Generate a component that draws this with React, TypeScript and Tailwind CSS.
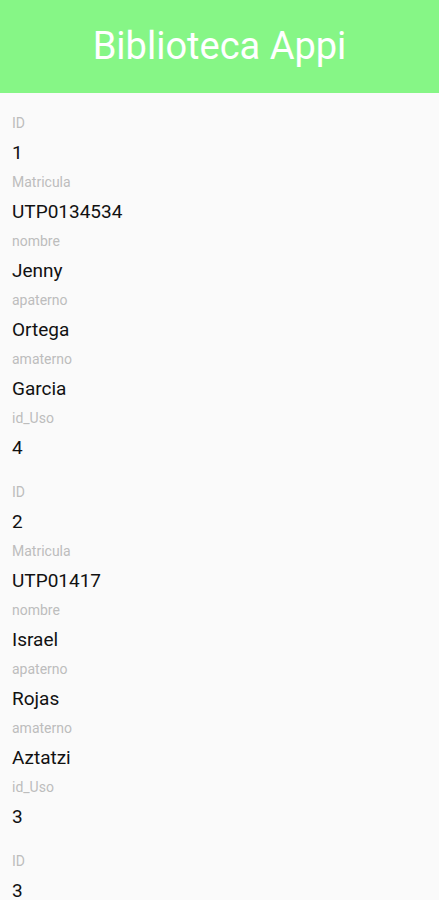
import React from 'react'

type Usuario = {
  id: number
  matricula: string
  nombre: string
  apaterno: string
  amaterno: string
  idUso: number
}

const usuarios: Usuario[] = [
  { id: 1, matricula: 'UTP0134534', nombre: 'Jenny', apaterno: 'Ortega', amaterno: 'Garcia', idUso: 4 },
  { id: 2, matricula: 'UTP01417', nombre: 'Israel', apaterno: 'Rojas', amaterno: 'Aztatzi', idUso: 3 },
  { id: 3, matricula: 'UTP0200', nombre: 'Maria', apaterno: 'Lopez', amaterno: 'Perez', idUso: 2 },
]

const Field = ({ label, value }: { label: string; value: string | number }) => (
  <div>
    <div className="h-[29px] flex items-center text-[14px] text-[#bdbdbd]">{label}</div>
    <div className="h-[30px] flex items-center text-[19px] text-[#111111]">{value}</div>
  </div>
)

const App: React.FC = () => {
  return (
    <div className="h-[900px] overflow-hidden bg-[#fafafa]" style={{ fontFamily: 'Roboto, "Noto Sans", sans-serif' }}>
      {/* Header */}
      <div className="h-[93px] bg-[#86f686] flex items-center justify-center">
        <h1 className="text-[38px] text-white font-normal">Biblioteca Appi</h1>
      </div>

      {/* Lista */}
      <div className="px-3 pt-px">
        {usuarios.map((u) => (
          <div key={u.id} className="pt-[15px]">
            <Field label="ID" value={u.id} />
            <Field label="Matricula" value={u.matricula} />
            <Field label="nombre" value={u.nombre} />
            <Field label="apaterno" value={u.apaterno} />
            <Field label="amaterno" value={u.amaterno} />
            <Field label="id_Uso" value={u.idUso} />
          </div>
        ))}
      </div>
    </div>
  )
}

export default App
